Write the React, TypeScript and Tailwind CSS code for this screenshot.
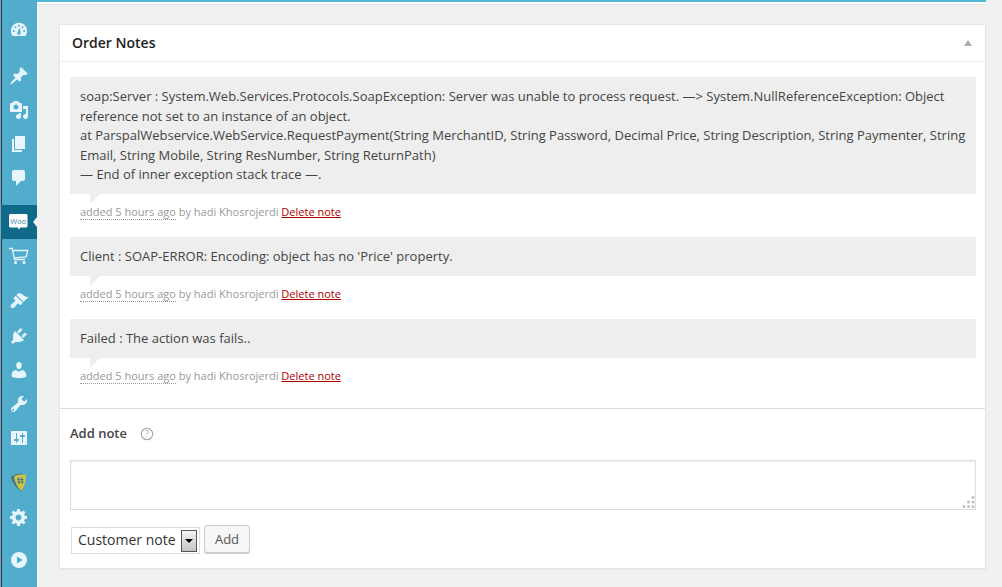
import React from "react";

const c = "#e6f6fc";

function Ico({ d, evenodd }: { d: string; evenodd?: boolean }) {
  return (
    <svg width="20" height="20" viewBox="0 0 20 20">
      <path fill={c} fillRule={evenodd ? "evenodd" : "nonzero"} d={d} />
    </svg>
  );
}

const dash = "M10 2.800C5.200 2.800 2 6.600 2 10.900c0 1.900.6 3.600 1.700 5.100h12.600c1.100-1.500 1.700-3.200 1.700-5.100 0-4.300-3.200-8.100-8-8.100zM4.800 10a1 1 0 1 1 0 2 1 1 0 0 1 0-2zM6.500 6.300a1 1 0 1 1 0 2 1 1 0 0 1 0-2zM10 4.700a1 1 0 1 1 0 2 1 1 0 0 1 0-2zM13.500 6.300a1 1 0 1 1 0 2 1 1 0 0 1 0-2zM15.200 10a1 1 0 1 1 0 2 1 1 0 0 1 0-2zM11.200 8.500l.3 4.200a1.600 1.600 0 1 1-3 0l1.600-4.200h1.100z";
const pin = "M10.440 3.020l1.820-1.820 6.360 6.350-1.830 1.820c-1.050-.68-2.480-.57-3.410.36l-.75.75c-.92.93-1.040 2.350-.35 3.410l-1.830 1.820-2.410-2.410-2.800 2.790c-.42.42-3.380 2.710-3.800 2.290s1.860-3.390 2.280-3.810l2.790-2.790L4.100 9.360l1.830-1.820c1.050.69 2.480.57 3.400-.36l.75-.75c.93-.92 1.050-2.350.36-3.410z";
const media = "M13 11V4c0-.55-.45-1-1-1h-1.670L9 1H5L3.670 3H2c-.55 0-1 .45-1 1v7c0 .55.45 1 1 1h10c.55 0 1-.45 1-1zM7 4.500c1.380 0 2.500 1.120 2.500 2.500S8.380 9.500 7 9.500 4.500 8.380 4.500 7 5.620 4.500 7 4.500zM14 6h5v10.500c0 1.380-1.120 2.500-2.500 2.500S14 17.880 14 16.500s1.120-2.500 2.500-2.500c.17 0 .34.02.5.05V9h-3V6zm-4 8.050V13h2v3.500c0 1.380-1.120 2.500-2.500 2.500S7 17.880 7 16.500 8.120 14 9.500 14c.17 0 .34.02.5.05z";
const pages = "M6 15V2h10v13H6zm-1 1h8v2H3V5h2v11z";
const bubble = "M5 2h9c1.100 0 2 .9 2 2v7c0 1.100-.9 2-2 2h-2l-5 5v-5H5c-1.100 0-2-.9-2-2V4c0-1.100.9-2 2-2z";
const brush = "M14.480 11.060L7.410 3.990l1.500-1.500c.5-.56 2.300-.47 3.510.32 1.210.8 1.430 1.280 2.910 2.100 1.180.64 2.450 1.260 4.670.85zm-.71.71L6.700 4.700 4.930 6.470c-.39.39-.39 1.020 0 1.410l1.060 1.060c.39.39.39 1.030 0 1.420-.6.6-1.430 1.110-2.210 1.690-.35.26-.7.53-1.010.84-1.430 1.430-1.400 2.950-.64 3.710.76.76 2.280.79 3.710-.64.31-.31.58-.66.84-1.010.58-.78 1.090-1.610 1.690-2.210.39-.39 1.030-.39 1.420 0l1.060 1.060c.39.39 1.020.39 1.410 0z";
const plug = "M13.110 4.360L9.870 7.600 8 5.730l3.240-3.240c.35-.34 1.050-.2 1.560.32.52.51.66 1.210.31 1.550zm-8 1.770l.91-1.120 9.010 9.010-1.190.84c-.71.71-2.630 1.160-3.820 1.160H6.140L4.900 17.260c-.59.59-1.540.59-2.120 0-.59-.58-.59-1.530 0-2.120l1.240-1.240v-3.880c0-1.130.4-3.190 1.090-3.890zm7.260 3.970l3.240-3.240c.34-.35 1.040-.21 1.550.31.52.51.66 1.210.31 1.560l-3.240 3.240z";
const user = "M10 9.250c-2.270 0-2.730-3.440-2.730-3.440C7 4.020 7.820 2 9.970 2c2.160 0 2.980 2.020 2.710 3.810 0 0-.41 3.440-2.680 3.440zm0 2.570L12.720 10c2.390 0 4.520 2.330 4.520 4.530v2.490s-3.650 1.130-7.240 1.130c-3.650 0-7.240-1.130-7.240-1.130v-2.490c0-2.250 1.940-4.480 4.150-4.480z";
const wrench = "M16.680 9.770c-1.340 1.340-3.300 1.670-4.950.99l-5.410 6.520c-.99.99-2.590.99-3.580 0s-.99-2.590 0-3.570l6.520-5.420c-.68-1.650-.35-3.610.99-4.950 1.280-1.280 3.120-1.620 4.710-1.060l-2.700 2.700 2.830 2.830 2.700-2.700c.56 1.590.22 3.430-1.060 4.710zM4.770 16.710c.39-.39.39-1.020 0-1.410s-1.020-.39-1.410 0-.39 1.020 0 1.410 1.020.39 1.410 0z";
const sliders = "M18 16V4c0-.55-.45-1-1-1H3c-.55 0-1 .45-1 1v12c0 .55.45 1 1 1h14c.55 0 1-.45 1-1zM8 11h1c.55 0 1 .45 1 1s-.45 1-1 1H8v1.500c0 .28-.22.5-.5.5s-.5-.22-.5-.5V13H6c-.55 0-1-.45-1-1s.45-1 1-1h1V5.500c0-.28.22-.5.5-.5s.5.22.5.5V11zm5-2h-1c-.55 0-1-.45-1-1s.45-1 1-1h1V5.500c0-.28.22-.5.5-.5s.5.22.5.5V7h1c.55 0 1 .45 1 1s-.45 1-1 1h-1v5.500c0 .28-.22.5-.5.5s-.5-.22-.5-.5V9z";
const gear = "M18 12h-2.180c-.17.7-.44 1.350-.81 1.930l1.540 1.540-2.100 2.100-1.540-1.540c-.58.36-1.230.64-1.910.81V19H8v-2.180c-.68-.17-1.330-.44-1.910-.81l-1.540 1.540-2.120-2.120 1.540-1.540c-.36-.58-.64-1.230-.81-1.910H1V9h2.180c.17-.7.44-1.350.81-1.930L2.450 5.530l2.100-2.100 1.540 1.540c.58-.36 1.230-.64 1.910-.81V2h3v2.180c.68.17 1.330.44 1.910.81l1.540-1.540 2.120 2.120-1.540 1.540c.36.58.64 1.230.81 1.910H18v3zm-8.500 1.500c1.660 0 3-1.340 3-3s-1.340-3-3-3-3 1.340-3 3 1.340 3 3 3z";
const play = "M10 2a8 8 0 1 0 0 16 8 8 0 0 0 0-16zM8 6.500l5.500 3.500L8 13.500z";

function Woo() {
  return (
    <svg width="20" height="20" viewBox="0 0 20 20">
      <path fill="#fff" d="M1.500 2h15.500c.8 0 1.500.7 1.500 1.500v10.500c0 .8-.7 1.500-1.500 1.500h-5.500l-1.700 2.200-.8-2.200H1.500C.7 15.500 0 14.800 0 14V3.500C0 2.700.7 2 1.500 2z" />
      <text x="9.200" y="11.500" textAnchor="middle" fontSize="7.500" fill="#3f86a8" fontFamily="Open Sans">Woo</text>
    </svg>
  );
}
function Cart() {
  return (
    <svg width="20" height="20" viewBox="0 0 20 20">
      <path fill="none" stroke={c} strokeWidth="1.300" d="M0 2.500h3.300L5.500 13.500h10.500M3.700 4.500h15l-1.500 6.500-12 .8" />
      <circle cx="6.500" cy="16.500" r="1.500" fill={c} />
      <circle cx="15" cy="16.500" r="1.500" fill={c} />
    </svg>
  );
}
function Shield() {
  return (
    <svg width="20" height="20" viewBox="0 0 20 20">
      <path fill="#4d6f80" d="M2 5c3-2.500 7-3.500 11-3.500l2 .5c2 6 1 12-1.500 16-.8.800-1.800.6-2.500 0C6.500 15 3 10 2 5z" />
      <path fill="#c6c64a" d="M5 4.500c3-1.700 6.500-2.500 10-2.300 1.800.3 2 1 2 2 0 5-1.200 10-3.500 13.500-.6.700-1.500.7-2.200.1C8 14.800 5.700 9.800 5 4.500z" />
      <path fill="none" stroke="#5a7d80" strokeWidth="1.200" d="M9.500 5.500l.6 6.500M12.700 5.500l.6 6.500M8 7.500h6.500M8.300 10h6.500" />
    </svg>
  );
}

function Item({ h, children, active }: { h: number; children: React.ReactNode; active?: boolean }) {
  return (
    <div
      className={active ? "relative flex items-center justify-center bg-[#0f6a8a]" : "flex items-center justify-center"}
      style={{ height: h }}
    >
      <div className="flex pr-[1px]">{children}</div>
      {active && (
        <div className="absolute right-0 top-1/2 -mt-[5px] h-0 w-0 border-y-[5px] border-r-[4px] border-y-transparent border-r-[#f1f1f1]" />
      )}
    </div>
  );
}

function Note({ text, mt }: { text: React.ReactNode; mt?: string }) {
  return (
    <div className={mt}>
      <div className="relative bg-[#eeeeee] pb-[9.5px] pl-[10px] pr-[10px] pt-[10px] text-[13px] leading-[19.5px] text-[#444]">
        {text}
        <div className="absolute left-[20px] top-full h-0 w-0 border-r-[10px] border-t-[10px] border-r-transparent border-t-[#eeeeee]" />
      </div>
      <p className="mt-[9px] h-[17px] px-[10px] text-[11px] leading-[17px] text-[#999]">
        <span className="border-b border-dotted border-[#999]">added 5 hours ago</span> by hadi Khosrojerdi{" "}
        <a className="text-[#a00] underline">Delete note</a>
      </p>
    </div>
  );
}

export default function App() {
  return (
    <div
      className="flex h-[587px] w-[1002px] overflow-hidden bg-[#f1f1f1]"
      style={{ fontFamily: '"Open Sans", "Noto Sans", sans-serif' }}
    >
      <aside className="flex w-[37px] shrink-0 flex-col border-l border-[#7fa5b5] bg-[#52accc] pt-[13px] shadow-[inset_1px_0_0_#1f3d4e]">
        <Item h={34}><Ico d={dash} evenodd /></Item>
        <div className="h-[12px]" />
        <Item h={34}><Ico d={pin} /></Item>
        <Item h={34}><Ico d={media} evenodd /></Item>
        <Item h={33}><Ico d={pages} /></Item>
        <div className="h-[1px]" />
        <Item h={34}><Ico d={bubble} /></Item>
        <div className="h-[10px]" />
        <Item h={34} active><Woo /></Item>
        <Item h={34}><Cart /></Item>
        <div className="h-[11px]" />
        <Item h={34}><Ico d={brush} /></Item>
        <div className="h-[1px]" />
        <Item h={34}><Ico d={plug} /></Item>
        <Item h={34}><Ico d={user} /></Item>
        <Item h={34}><Ico d={wrench} /></Item>
        <Item h={33}><Ico d={sliders} evenodd /></Item>
        <div className="h-[11px]" />
        <Item h={34}><Shield /></Item>
        <div className="h-[1px]" />
        <Item h={34}><Ico d={gear} evenodd /></Item>
        <div className="h-[9px]" />
        <Item h={34}><Ico d={play} evenodd /></Item>
      </aside>
      <main className="min-w-0 flex-1">
        <div className="mr-[16px] h-[4px] border-t-2 border-[#52b8d8] bg-white shadow-[0_1px_1px_rgba(0,0,0,0.06)]" />
        <section className="ml-[22px] mr-[16px] mt-[20px] h-[545px] border border-[#e5e5e5] bg-white shadow-[0_1px_1px_rgba(0,0,0,0.04)]">
          <header className="flex h-[37px] items-center justify-between border-b border-[#eeeeee] pb-[2px] pl-[12px] pr-[13px]">
            <h2 className="text-[14px] font-semibold text-[#222]">Order Notes</h2>
            <div className="mt-[2px] h-0 w-0 border-x-[4px] border-b-[6px] border-x-transparent border-b-[#aaaaaa]" />
          </header>
          <div className="h-[347px] border-b border-[#dddddd] pl-[10px] pr-[9px] pt-[15px]">
            <Note
              text={
                <>
                  soap:Server : System.Web.Services.Protocols.SoapException: Server was unable to process request. —&gt; System.NullReferenceException: Object reference not set to an instance of an object.
                  <br />
                  at ParspalWebservice.WebService.RequestPayment(String MerchantID, String Password, Decimal Price, String Description, String Paymenter, String Email, String Mobile, String ResNumber, String ReturnPath)
                  <br />
                  — End of inner exception stack trace —.
                </>
              }
            />
            <Note mt="mt-[17px]" text="Client : SOAP-ERROR: Encoding: object has no 'Price' property." />
            <Note mt="mt-[17px]" text="Failed : The action was fails.." />
          </div>
          <div className="pl-[10px] pr-[9px]">
            <div className="flex h-[50px] items-center">
              <span className="text-[13px] font-semibold text-[#444]">Add note</span>
              <svg className="-mt-[1px] ml-[13px]" width="14" height="14" viewBox="0 0 14 14">
                <circle cx="7" cy="7" r="5.700" fill="none" stroke="#aaa" strokeWidth="1.200" />
                <text x="7" y="10" textAnchor="middle" fontSize="9" fill="#aaa" fontFamily="Open Sans">?</text>
              </svg>
            </div>
            <div className="relative mt-[1px] h-[50px] border border-[#dddddd] bg-white shadow-[inset_0_1px_2px_rgba(0,0,0,0.07)]">
              <svg className="absolute bottom-0 right-0" width="14" height="14" viewBox="0 0 14 14">
                <g fill="#bbb">
                  <rect x="10.700" y="1.300" width="2.500" height="2.500" />
                  <rect x="6.300" y="5.800" width="2.500" height="2.500" />
                  <rect x="10.700" y="5.800" width="2.500" height="2.500" />
                  <rect x="1.800" y="10.300" width="2.500" height="2.500" />
                  <rect x="6.300" y="10.300" width="2.500" height="2.500" />
                  <rect x="10.700" y="10.300" width="2.500" height="2.500" />
                </g>
              </svg>
            </div>
            <div className="mt-[15px] flex items-start">
              <div className="ml-[1px] mt-[2px] flex h-[27px] w-[129px] items-center justify-between border border-[#ddd] pl-[6px] pr-[2px] text-[14px] text-[#333]">
                <span className="pb-[2px]">Customer note</span>
                <div className="flex h-[22px] w-[16px] items-center justify-center border border-[#555] bg-gradient-to-b from-[#f4f4f4] to-[#c4c4c4]">
                  <div className="h-0 w-0 border-x-[4px] border-t-[4px] border-x-transparent border-t-black" />
                </div>
              </div>
              <button className="ml-[4px] h-[28px] w-[46px] rounded-[3px] border border-[#cccccc] bg-[#f7f7f7] pt-[1px] text-[13px] text-[#555] shadow-[0_1px_0_#ccc]">
                Add
              </button>
            </div>
          </div>
        </section>
      </main>
    </div>
  );
}
